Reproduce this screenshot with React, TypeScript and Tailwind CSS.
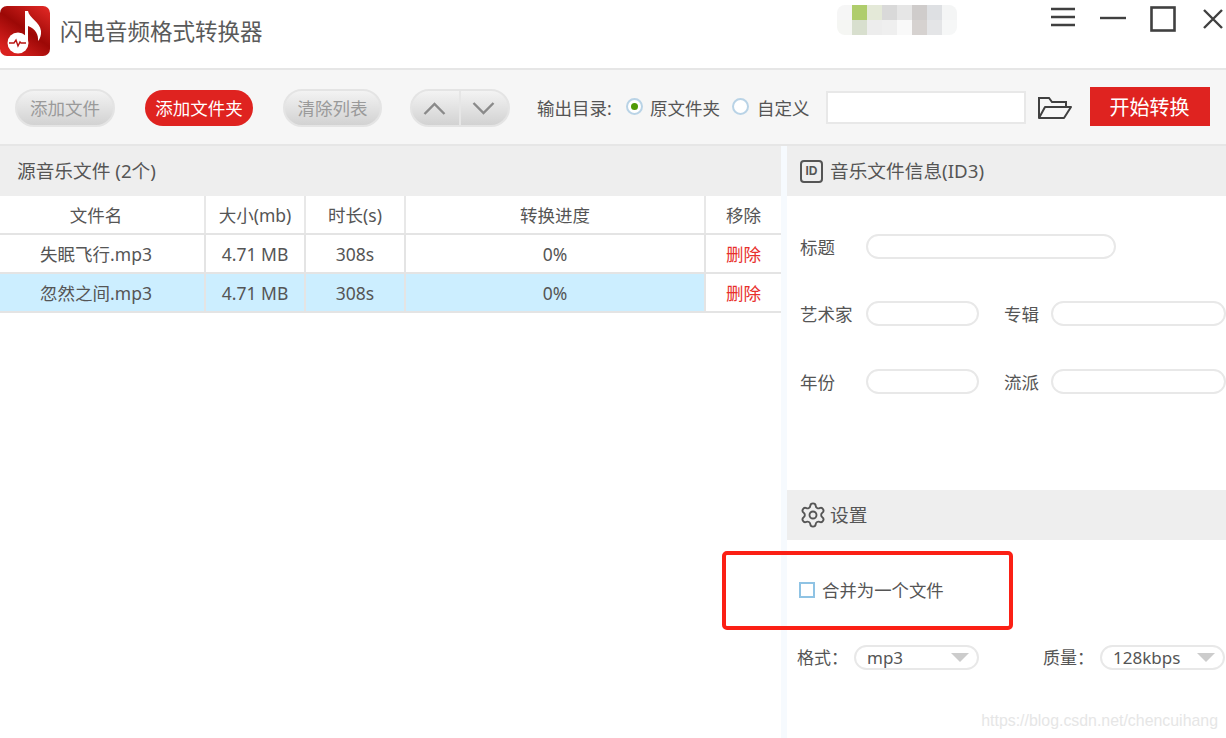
import { Settings } from "lucide-react";

const mosaic = [
  ["#f6f6f6", "#afcd6c", "#e4e9d8", "#d9d9d9", "#e6e6e6", "#cfcccb", "#dee0e3", "#f4f5f5"],
  ["#f5f6f3", "#d8dfce", "#ededed", "#efefef", "#f9f9f9", "#d6d2d0", "#e4e5e7", "#f6f7f7"],
];

const files = [
  { name: "失眠飞行.mp3", size: "4.71 MB", time: "308s", progress: "0%", selected: false },
  { name: "忽然之间.mp3", size: "4.71 MB", time: "308s", progress: "0%", selected: true },
];

function GreyButton({ label, width }: { label: string; width: string }) {
  return (
    <button
      className={`h-[38px] ${width} rounded-full border-2 border-[#e4e4e4] bg-gradient-to-b from-[#f3f3f3] to-[#d2d2d2] text-[17.5px] text-[#9a9a9a]`}
    >
      {label}
    </button>
  );
}

function Logo() {
  return (
    <svg width="50" height="50" viewBox="0 0 50 50" className="shrink-0">
      <defs>
        <linearGradient id="logoBg" x1="1" y1="0" x2="0.3" y2="1">
          <stop offset="0" stopColor="#e52a26" />
          <stop offset="0.55" stopColor="#9c0806" />
          <stop offset="1" stopColor="#d9211f" />
        </linearGradient>
      </defs>
      <rect width="50" height="50" rx="7" fill="url(#logoBg)" />
      <circle cx="18" cy="37" r="10.5" fill="#fff" />
      <path d="M25 5h3c1 7 12 11 13 20 .4 4-1 8-3 10 .6-6-2-12-10-15v18h-3z" fill="#fff" />
      <path d="M9 37h5l2-3 2 6 2-4 1 1h5" fill="none" stroke="#b81412" strokeWidth="1.4" />
    </svg>
  );
}

function Pill({ className }: { className: string }) {
  return <div className={`h-[25px] rounded-full border-2 border-[#e8e8e8] bg-white ${className}`} />;
}

function Select({ value }: { value: string }) {
  return (
    <div className="flex h-[25px] w-[125px] items-center justify-between rounded-full border-2 border-[#e8e8e8] bg-white pl-[11px] pr-[8px] text-[17px] text-[#555]">
      <span>{value}</span>
      <span className="h-0 w-0 border-x-[9px] border-t-[9px] border-x-transparent border-t-[#cccccc]" />
    </div>
  );
}

export default function App() {
  return (
    <div
      className="relative flex h-[738px] w-[1226px] flex-col overflow-hidden bg-white text-[#555]"
      style={{ fontFamily: '"Noto Sans", "Noto Sans CJK SC", sans-serif' }}
    >
      {/* title bar */}
      <header className="flex h-[70px] shrink-0 items-start border-b-2 border-[#e6e6e6] bg-white">
        <div className="mt-[6px]">
          <Logo />
        </div>
        <h1 className="ml-[10px] mt-[14px] text-[22.5px] leading-[36px] text-[#5a5a5a]">闪电音频格式转换器</h1>
        <div className="ml-[574px] mt-[5px] flex flex-col overflow-hidden rounded-[8px]">
          {mosaic.map((row, i) => (
            <div key={i} className="flex">
              {row.map((color, j) => (
                <span key={j} className="h-[15px] w-[15px]" style={{ backgroundColor: color }} />
              ))}
            </div>
          ))}
        </div>
        <div className="ml-[-27px] mt-[6px] flex items-start">
          <svg width="26" height="22" viewBox="0 0 26 22" className="ml-[120px]">
            <path d="M1 3h24M1 11h24M1 19h24" stroke="#404040" strokeWidth="2.4" />
          </svg>
          <svg width="26" height="22" viewBox="0 0 26 22" className="ml-[24px]">
            <path d="M0 12h26" stroke="#404040" strokeWidth="2.4" />
          </svg>
          <svg width="26" height="26" viewBox="0 0 26 26" className="ml-[24px]">
            <rect x="1.5" y="1.5" width="23" height="23" fill="none" stroke="#404040" strokeWidth="2.6" />
          </svg>
          <svg width="20" height="20" viewBox="0 0 20 20" className="ml-[27px] mt-[3px]">
            <path d="M1 1l18 18M19 1L1 19" stroke="#404040" strokeWidth="2.4" />
          </svg>
        </div>
      </header>

      {/* toolbar */}
      <div className="flex h-[76px] shrink-0 items-center border-b-2 border-[#e6e6e6] bg-[#f6f6f6] pl-[15px] pt-[2px] text-[17.5px]">
        <GreyButton label="添加文件" width="w-[100px]" />
        <button className="ml-[30px] h-[36px] w-[108px] rounded-full bg-[#df2320] text-white">添加文件夹</button>
        <div className="ml-[30px]">
          <GreyButton label="清除列表" width="w-[99px]" />
        </div>
        <div className="ml-[28px] flex h-[38px] w-[100px] overflow-hidden rounded-full border-2 border-[#e4e4e4] bg-gradient-to-b from-[#f3f3f3] to-[#d2d2d2]">
          <div className="flex flex-1 items-center justify-center border-r-2 border-[#e6e6e6] pr-[3px]">
            <svg width="23" height="13" viewBox="0 0 23 13">
              <path d="M1.5 12L11.5 2l10 10" fill="none" stroke="#8a8a8a" strokeWidth="2.4" />
            </svg>
          </div>
          <div className="flex flex-1 items-center justify-center pr-[3px]">
            <svg width="23" height="13" viewBox="0 0 23 13">
              <path d="M1.5 1l10 10 10-10" fill="none" stroke="#8a8a8a" strokeWidth="2.4" />
            </svg>
          </div>
        </div>
        <span className="ml-[27px] w-[78px] whitespace-nowrap">输出目录:</span>
        <span className="ml-[11px] mb-[3px] flex h-[17px] w-[17px] items-center justify-center rounded-full border-2 border-[#b9d3e6] bg-white">
          <span className="h-[7px] w-[7px] rounded-full bg-[#4f9a06]" />
        </span>
        <span className="ml-[7px]">原文件夹</span>
        <span className="ml-[12px] mb-[3px] h-[17px] w-[17px] rounded-full border-2 border-[#b9d3e6] bg-white" />
        <span className="ml-[8px]">自定义</span>
        <div className="ml-[16px] mb-[2px] h-[33px] w-[200px] border-2 border-[#e8e8e8] bg-white" />
        <svg width="34" height="24" viewBox="0 0 34 24" className="ml-[12px]">
          <path d="M1 22V2h10l3 4h14v5" fill="none" stroke="#404040" strokeWidth="2" />
          <path d="M1 22l6-11h26l-7 11z" fill="none" stroke="#404040" strokeWidth="2" strokeLinejoin="round" />
        </svg>
        <button className="ml-[18px] mb-[3px] h-[39px] w-[120px] bg-[#df2320] pt-[2px] text-[20px] text-white">开始转换</button>
      </div>

      <div className="flex min-h-0 flex-1">
        {/* file list */}
        <section className="w-[781px] shrink-0">
          <div className="flex h-[50px] items-center bg-[#eeeeee] pl-[17px] text-[18.7px]">源音乐文件 (2个)</div>
          <div className="flex h-[39px] items-center border-b-2 border-[#e4e4e4] text-[17.5px]">
            <div className="w-[206px] border-r-2 border-[#e8e8e8] pr-[12px] pt-[1px] text-center leading-[36px]">文件名</div>
            <div className="w-[100px] border-r-2 border-[#e8e8e8] pt-[1px] text-center leading-[36px]">大小(mb)</div>
            <div className="w-[100px] border-r-2 border-[#e8e8e8] pt-[1px] text-center leading-[36px]">时长(s)</div>
            <div className="w-[300px] border-r-2 border-[#e8e8e8] pt-[1px] text-center leading-[36px]">转换进度</div>
            <div className="flex-1 pt-[1px] text-center leading-[36px]">移除</div>
          </div>
          {files.map((file) => (
            <div key={file.name} className="flex h-[39px] items-center border-b-2 border-[#e4e4e4] text-[17.5px]">
              <div className={`flex h-full w-[706px] ${file.selected ? "bg-[#cceeff]" : "bg-white"}`}>
                <div className="w-[206px] border-r-2 border-[#e4e4e4] pr-[12px] pt-[1px] text-center leading-[36px]">{file.name}</div>
                <div className="w-[100px] border-r-2 border-[#e4e4e4] pt-[1px] text-center leading-[36px]">{file.size}</div>
                <div className="w-[100px] border-r-2 border-[#e4e4e4] pt-[1px] text-center leading-[36px]">{file.time}</div>
                <div className="w-[300px] border-r-2 border-[#e4e4e4] pt-[1px] text-center leading-[36px]">{file.progress}</div>
              </div>
              <div className="flex-1 pt-[1px] text-center leading-[36px] text-[#e8302c]">删除</div>
            </div>
          ))}
        </section>

        <div className="w-[6px] shrink-0 bg-[#f6fafe]" />

        {/* right panel */}
        <aside className="flex w-[439px] shrink-0 flex-col">
          <div className="flex h-[50px] items-center bg-[#eeeeee] pl-[13px] text-[18.7px]">
            <span
              className="flex h-[23px] w-[23px] items-center justify-center rounded-[4px] border-2 border-[#555] text-[12px] font-bold leading-none"
              style={{ fontFamily: '"Liberation Sans", sans-serif' }}
            >
              ID
            </span>
            <span className="ml-[7px]">音乐文件信息(ID3)</span>
          </div>

          <div className="h-[294px] pl-[13px] text-[17.5px] leading-[25px]">
            <div className="mt-[38px] flex items-start">
              <span className="mt-[1px] w-[66px]">标题</span>
              <Pill className="w-[250px]" />
            </div>
            <div className="mt-[41px] flex items-start">
              <span className="mt-[1px] w-[66px]">艺术家</span>
              <Pill className="w-[113px]" />
              <span className="ml-[25px] mt-[1px] w-[47px]">专辑</span>
              <Pill className="w-[175px]" />
            </div>
            <div className="mt-[42px] flex items-start">
              <span className="mt-[1px] w-[66px]">年份</span>
              <Pill className="w-[113px]" />
              <span className="ml-[25px] mt-[1px] w-[47px]">流派</span>
              <Pill className="w-[175px]" />
            </div>
          </div>

          <div className="flex h-[50px] items-center bg-[#eeeeee] pl-[12px] text-[18.7px]">
            <Settings size={28} strokeWidth={1.6} color="#555" />
            <span className="ml-[3px]">设置</span>
          </div>

          <div className="mt-[37px] flex items-center pl-[12px] text-[17.4px]">
            <span className="h-[16px] w-[16px] border-2 border-[#8fc3e4] bg-white" />
            <span className="ml-[7px]">合并为一个文件</span>
          </div>

          <div className="mt-[42px] flex items-center pl-[10px] text-[17px]">
            <span className="w-[57px]">格式：</span>
            <Select value="mp3" />
            <span className="ml-[64px] w-[57px]">质量：</span>
            <Select value="128kbps" />
          </div>
        </aside>
      </div>

      {/* annotation + watermark sit over the screenshot */}
      <div className="pointer-events-none absolute left-[722px] top-[551px] h-[79px] w-[291px] rounded-[5px] border-[4px] border-[#fb2015]" />
      <span
        className="absolute bottom-[7px] right-[8px] text-[15.9px] leading-[20px] text-[#e6e6e6]"
        style={{ fontFamily: '"Liberation Sans", sans-serif' }}
      >
        https://blog.csdn.net/chencuihang
      </span>
    </div>
  );
}
